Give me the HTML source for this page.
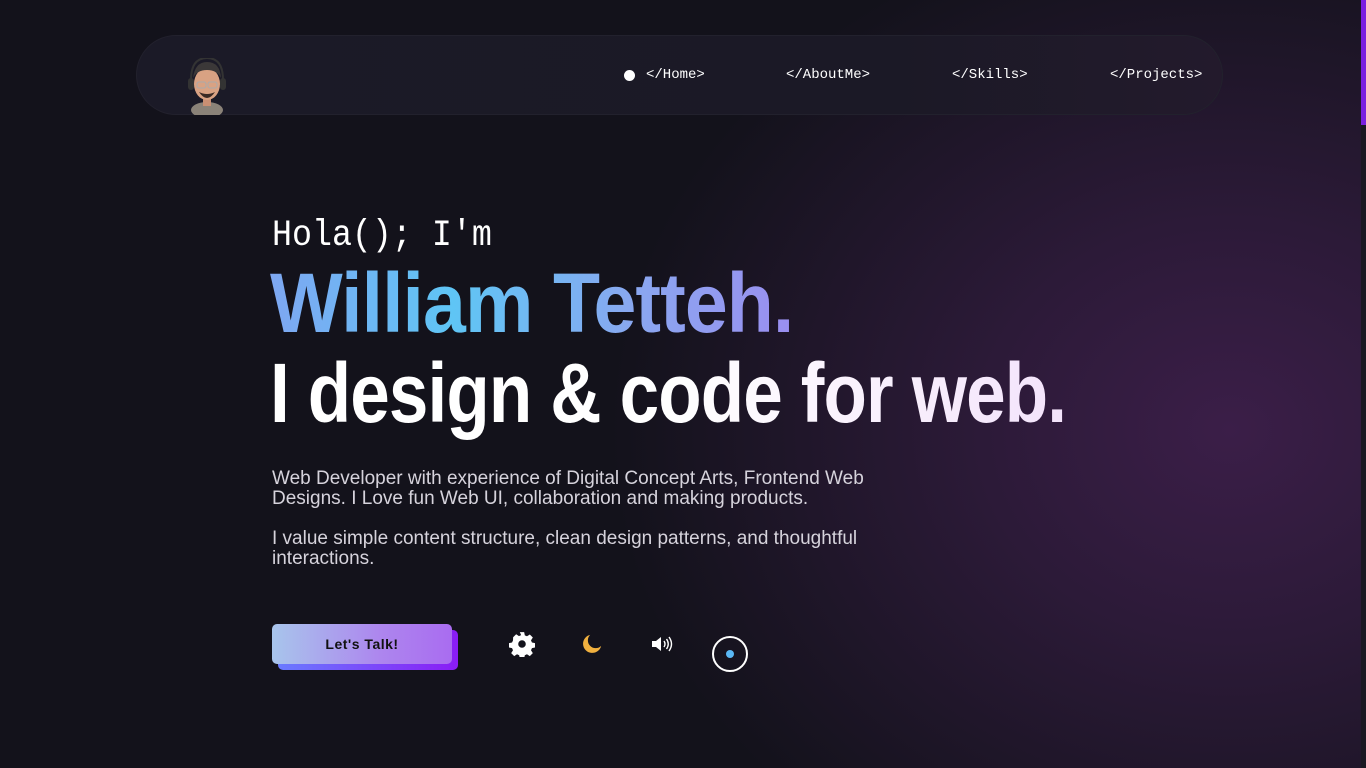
<!DOCTYPE html>
<html><head><style>
*{margin:0;padding:0;box-sizing:border-box}
body{width:1366px;height:768px;overflow:hidden;background:#13121b;font-family:"Liberation Sans",sans-serif;position:relative}
.bg{position:absolute;inset:0;background:radial-gradient(ellipse 620px 520px at 1230px 430px,#3b1e48 0%,#2c1a38 40%,rgba(19,18,27,0) 100%)}
.sb{position:absolute;right:0;top:0;width:5px;height:768px;background:#1a1822}
.sb i{position:absolute;left:0;top:0;width:5px;height:125px;background:#7a1fe0}
nav{position:absolute;left:136px;top:35px;width:1087px;height:80px;border-radius:40px;background:linear-gradient(90deg,#1b1a27,#1b1926 70%,#231a2c);border:1px solid #22212d}
.av{position:absolute;left:50px;top:22px;width:40px;height:57px}
.nl{position:absolute;top:31px;font-family:"Liberation Mono",monospace;font-size:14px;color:#fff}
.dot{position:absolute;left:487px;top:34px;width:11px;height:11px;border-radius:50%;background:#fff}
.hola{position:absolute;left:272px;top:215px;font-family:"Liberation Mono",monospace;font-size:37px;color:#fff;transform:scaleX(.9);transform-origin:0 0}
h1{position:absolute;left:270px;font-size:84px;font-weight:bold;letter-spacing:-1px;white-space:nowrap;transform-origin:0 0}
.n{top:255px;background:linear-gradient(90deg,#7ea7f2,#5fc5f5 35%,#8aa7f0 70%,#9a8ef0);-webkit-background-clip:text;color:transparent;transform:scaleX(.917)}
.d{top:345px;background:linear-gradient(90deg,#fff 50%,#f3e3fb);-webkit-background-clip:text;color:transparent;transform:scaleX(.845)}
p{position:absolute;left:272px;width:640px;font-size:19px;line-height:20px;color:#d6d3dc}
.btn2{position:absolute;left:278px;top:630px;width:180px;height:40px;border-radius:5px;background:linear-gradient(90deg,#6a7bff,#8a1cf5)}
.btn{position:absolute;left:272px;top:624px;width:180px;height:40px;border-radius:5px;background:linear-gradient(90deg,#a8c5ec,#ad86ee 60%,#a96cf0);color:#111;font-weight:bold;font-size:14px;text-align:center;line-height:40px;letter-spacing:.5px}
</style></head><body>
<div class="bg"></div>
<nav>
<svg class="av" viewBox="0 0 40 57"><ellipse cx="20" cy="52" rx="16" ry="8" fill="#8a8278"/><rect x="16" y="38" width="8" height="10" fill="#c98f73"/><ellipse cx="20" cy="26" rx="13" ry="16" fill="#d9a283"/><path d="M6 20 Q8 4 20 4 Q33 4 34 20 Q30 12 20 12 Q10 12 6 20Z" fill="#3b3838"/><path d="M12 34 Q20 46 28 34 Q20 38 12 34Z" fill="#3a2a24"/><rect x="1" y="20" width="6" height="12" rx="3" fill="#333"/><rect x="33" y="20" width="6" height="12" rx="3" fill="#333"/><path d="M4 22 Q4 0 20 0 Q36 0 36 22" stroke="#333" stroke-width="2" fill="none"/><rect x="10" y="24" width="9" height="6" rx="2" fill="none" stroke="#aaa"/><rect x="21" y="24" width="9" height="6" rx="2" fill="none" stroke="#aaa"/></svg>
<div class="dot"></div>
<div class="nl" style="left:509px">&lt;/Home&gt;</div>
<div class="nl" style="left:649px">&lt;/AboutMe&gt;</div>
<div class="nl" style="left:815px">&lt;/Skills&gt;</div>
<div class="nl" style="left:973px">&lt;/Projects&gt;</div>
</nav>
<div class="hola">Hola(); I'm</div>
<h1 class="n">William Tetteh.</h1>
<h1 class="d">I design &amp; code for web.</h1>
<p style="top:469px">Web Developer with experience of Digital Concept Arts, Frontend Web Designs. I Love fun Web UI, collaboration and making products.</p>
<p style="top:529px">I value simple content structure, clean design patterns, and thoughtful interactions.</p>
<div class="btn2"></div><div class="btn">Let's Talk!</div>
<svg style="position:absolute;left:509px;top:631px" width="26" height="26" viewBox="0 0 24 24"><path fill="#fff" d="M10 1h4l.6 3 2 .9 2.6-1.7 2.8 2.8-1.7 2.6.9 2 3 .6v4l-3 .6-.9 2 1.7 2.6-2.8 2.8-2.6-1.7-2 .9-.6 3h-4l-.6-3-2-.9-2.6 1.7-2.8-2.8 1.7-2.6-.9-2-3-.6v-4l3-.6.9-2L3.8 5.8l2.8-2.8 2.6 1.7 2-.9zM12 8.5a3.5 3.5 0 100 7 3.5 3.5 0 000-7z"/></svg>
<svg style="position:absolute;left:581px;top:633px" width="22" height="22" viewBox="0 0 24 24"><path fill="#f0b03f" d="M10 2a10 10 0 1012 12A8 8 0 0110 2z"/></svg>
<svg style="position:absolute;left:651px;top:635px" width="22" height="18" viewBox="0 0 22 18"><path fill="#fff" d="M1 6h4l5-4v14l-5-4H1z"/><path d="M13 6q2 3 0 6M15.5 4q3.5 5 0 10M18 2q5 7 0 14" stroke="#fff" stroke-width="1.4" fill="none"/></svg>
<div style="position:absolute;left:712px;top:636px;width:36px;height:36px;border:2px solid #fff;border-radius:50%"></div>
<div style="position:absolute;left:726px;top:650px;width:8px;height:8px;border-radius:50%;background:#5ab8f5"></div>
<div class="sb"><i></i></div>
</body></html>
